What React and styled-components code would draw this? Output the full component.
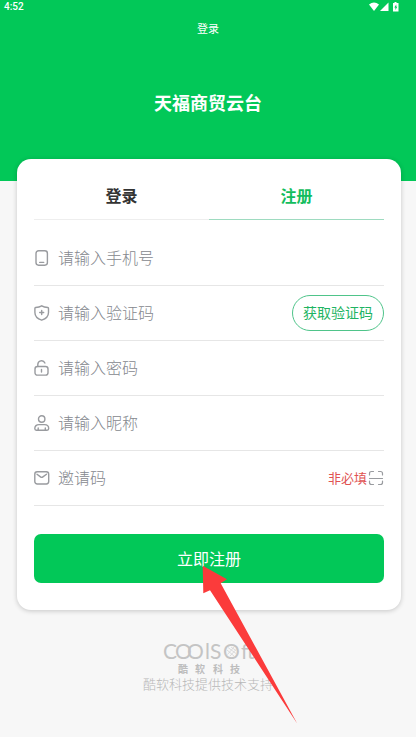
import React, { useState } from 'react'
import styled, { createGlobalStyle } from 'styled-components'

const fields = [
  { id: 'phone', type: 'tel', label: '请输入手机号', icon: <PhoneIcon /> },
  { id: 'code', type: 'text', label: '请输入验证码', icon: <ShieldIcon /> },
  { id: 'password', type: 'password', label: '请输入密码', icon: <LockIcon /> },
  { id: 'nickname', type: 'text', label: '请输入昵称', icon: <UserIcon /> },
  { id: 'invite', type: 'text', label: '邀请码', icon: <MailIcon /> },
]

const App = () => {
  const [tab, setTab] = useState('register')

  return (
    <StPage>
      <GlobalStyle />
      <StHeader>
        <StStatusBar>
          <span>4:52</span>
          <StatusIcons />
        </StStatusBar>
        <StNavTitle>登录</StNavTitle>
        <StTitle>天福商贸云台</StTitle>
      </StHeader>
      <StCard onSubmit={(e) => e.preventDefault()}>
        <StTabs>
          <StTab
            type="button"
            $active={tab === 'login'}
            onClick={() => setTab('login')}
          >
            登录
          </StTab>
          <StTab
            type="button"
            $active={tab === 'register'}
            onClick={() => setTab('register')}
          >
            注册
          </StTab>
        </StTabs>
        {fields.map((item) => {
          return (
            <StRow key={item.id}>
              <StLabel htmlFor={item.id}>{item.icon}</StLabel>
              <StInput
                id={item.id}
                type={item.type}
                placeholder={item.label}
                aria-label={item.label}
              />
              {item.id === 'code' && (
                <StCodeButton type="button">获取验证码</StCodeButton>
              )}
              {item.id === 'invite' && (
                <>
                  <StOptional>非必填</StOptional>
                  <StScanButton type="button" aria-label="扫一扫">
                    <ScanIcon />
                  </StScanButton>
                </>
              )}
            </StRow>
          )
        })}
        <StSubmitWrap>
          <StSubmit type="submit">立即注册</StSubmit>
          <StArrow width="96" height="160" viewBox="0 0 96 160" aria-hidden="true">
            <path d="M0.7 0.7 25 14.3 18.7 18.3 95.3 158.7 8 25.3 1.3 28.3Z" />
          </StArrow>
        </StSubmitWrap>
      </StCard>
      <StFooter>
        <Logo />
        <StSupport>酷软科技提供技术支持</StSupport>
      </StFooter>
    </StPage>
  )
}

export default App

function StatusIcons() {
  return (
    <svg width="31" height="10" viewBox="0 0 31 10" fill="#ffffff">
      <path d="M0 2.4Q5 -1.4 10 2.4L5 9Z" />
      <path d="M19.5 0.5V9H11Z" />
      <path
        fillRule="evenodd"
        d="M25.5 0h2v1H29.5v8.5H24V1h1.5ZM27.3 2.5 25.3 5.5H26.4V8L28.3 4.8H27.3Z"
      />
    </svg>
  )
}

function PhoneIcon() {
  return (
    <StIcon viewBox="0 0 16 16">
      <rect x="2" y="0.8" width="11.4" height="14.4" rx="2.6" />
      <path d="M5.7 12.4h4" />
    </StIcon>
  )
}

function ShieldIcon() {
  return (
    <StIcon viewBox="0 0 16 16">
      <path d="M7.7 0.8C5.8 2 3.5 2.4 1.6 2.5Q0.9 2.6 0.9 3.4V7.5C0.9 11.5 4 14 7.7 15.2C11.4 14 14.5 11.5 14.5 7.5V3.4Q14.5 2.6 13.8 2.5C11.9 2.4 9.6 2 7.7 0.8Z" />
      <path d="M7.7 5.5v4M5.7 7.5h4" />
    </StIcon>
  )
}

function LockIcon() {
  return (
    <StIcon viewBox="0 0 16 16">
      <rect x="1" y="6.5" width="13" height="8.6" rx="2.4" />
      <path d="M3.8 6.5V4.5A3.7 3.7 0 0 1 10.9 3M7.5 9.5v2.6" />
    </StIcon>
  )
}

function UserIcon() {
  return (
    <StIcon viewBox="0 0 16 16">
      <circle cx="7.7" cy="4" r="3.2" />
      <path d="M2.3 15.2H13.1Q14.7 15.2 14.7 13.5C14.7 11 13 9.6 10.5 9.6H5C2.5 9.6 0.8 11 0.8 13.5Q0.8 15.2 2.3 15.2ZM4.2 13v2M11.3 13v2" />
    </StIcon>
  )
}

function MailIcon() {
  return (
    <StIcon viewBox="0 0 16 16">
      <rect x="0.8" y="1.8" width="13.9" height="12.2" rx="2.4" />
      <path d="M3 4.2 6.5 6.9Q7.7 7.8 8.9 6.9L12.5 4.2" />
    </StIcon>
  )
}

function ScanIcon() {
  return (
    <StIcon viewBox="0 0 16 16" $thin>
      <path d="M1.5 5V3.5Q1.5 1.5 3.5 1.5H5.5M10.5 1.5h2Q14.5 1.5 14.5 3.5V5M1.5 11v1.5Q1.5 14.5 3.5 14.5H5.5M10.5 14.5h2Q14.5 14.5 14.5 12.5V11M1.5 8.5h13" />
    </StIcon>
  )
}

function Logo() {
  return (
    <StLogo width="100" height="39" viewBox="0 0 100 39">
      <StLogoName y="22" x="5 17 29 47 52 65 83 89">
        COOlSOft
      </StLogoName>
      <g fill="none" stroke="#d0d0d0" strokeWidth="0.7">
        <path d="M69 13 76 19M70 10.5 78 16.5M73 10 78 13.5M69.5 17.5 76 10M72 19 78 12.5" />
      </g>
      <StLogoSub y="36" x="20 37 55 72">
        酷软科技
      </StLogoSub>
    </StLogo>
  )
}

const GlobalStyle = createGlobalStyle`
  * {
    box-sizing: border-box;
  }
  body {
    margin: 0;
    background-color: #f7f7f7;
    font-family: Roboto, "Noto Sans CJK SC", sans-serif;
  }
  button, input {
    font-family: inherit;
  }
`
const StPage = styled.div`
  min-height: 100vh;
  background-color: #f7f7f7;
`
const StHeader = styled.header`
  height: 181px;
  color: #ffffff;
  background-color: #02c858;
  text-align: center;
`
const StStatusBar = styled.div`
  display: flex;
  justify-content: space-between;
  align-items: center;
  height: 13px;
  padding: 0 16px 0 4px;
  font-size: 10px;
  font-weight: 500;
  line-height: 13px;
`
const StNavTitle = styled.div`
  font-size: 11px;
  line-height: 34px;
`
const StTitle = styled.h1`
  margin: 44px 0 0;
  font-size: 18px;
  font-weight: 700;
  line-height: 26px;
`
const StCard = styled.form`
  position: relative;
  margin: -22px 15px 0 17px;
  padding: 12px 17px 27px;
  border-radius: 14px;
  background-color: #ffffff;
  box-shadow: 0 1px 5px rgba(0, 0, 0, 0.2);
`
const StTabs = styled.div`
  display: flex;
  margin-bottom: 11px;
`
const StTab = styled.button`
  flex: 1;
  height: 49px;
  padding: 0;
  border: none;
  border-bottom: 1px solid ${({ $active }) => ($active ? '#9edbc0' : '#eeeeee')};
  color: ${({ $active }) => ($active ? '#13bd5d' : '#333333')};
  background: none;
  font-size: 16px;
  font-weight: 700;
  cursor: pointer;
`
const StRow = styled.div`
  display: flex;
  align-items: center;
  height: 55px;
  border-bottom: 1px solid #e6e6e6;
`
const StLabel = styled.label`
  display: flex;
  margin-right: 8px;
`
const StIcon = styled.svg`
  display: block;
  width: 16px;
  height: 16px;
  fill: none;
  stroke: #999b9f;
  stroke-width: ${({ $thin }) => ($thin ? '1.2' : '1.4')};
  stroke-linecap: round;
`
const StInput = styled.input`
  flex: 1;
  min-width: 0;
  height: 40px;
  padding: 0;
  border: none;
  outline: none;
  color: #333333;
  background: none;
  font-size: 16px;
  font-weight: 300;
  &::placeholder {
    color: #85888e;
    opacity: 1;
  }
`
const StCodeButton = styled.button`
  height: 36px;
  padding: 0 10px 2px;
  border: 1px solid #4fc48a;
  border-radius: 18px;
  color: #1fb463;
  background-color: #ffffff;
  font-size: 14px;
  cursor: pointer;
`
const StOptional = styled.span`
  margin-right: 1px;
  padding-bottom: 2px;
  color: #e05252;
  font-size: 13px;
`
const StScanButton = styled.button`
  padding: 0;
  border: none;
  background: none;
  cursor: pointer;
`
const StSubmitWrap = styled.div`
  position: relative;
  margin-top: 28px;
`
const StSubmit = styled.button`
  display: block;
  width: 100%;
  height: 49px;
  padding: 0 0 2px;
  border: none;
  border-radius: 7px;
  color: #ffffff;
  background-color: #02c858;
  font-size: 16px;
  cursor: pointer;
`
const StArrow = styled.svg`
  position: absolute;
  top: 31px;
  left: calc(50% - 7px);
  fill: #fb3b3b;
  pointer-events: none;
`
const StFooter = styled.footer`
  display: flex;
  flex-direction: column;
  align-items: center;
  padding-top: 27px;
`
const StLogo = styled.svg`
  display: block;
`
const StLogoName = styled.text`
  fill: #c4c4c4;
  font-family: Lato, sans-serif;
  font-size: 21px;
`
const StLogoSub = styled.text`
  fill: #bdbdbd;
  font-family: "Noto Sans CJK SC", sans-serif;
  font-size: 10px;
  font-weight: 700;
`
const StSupport = styled.p`
  margin: 0;
  color: #b8b8b8;
  font-size: 13px;
  font-weight: 300;
  line-height: 18px;
`
